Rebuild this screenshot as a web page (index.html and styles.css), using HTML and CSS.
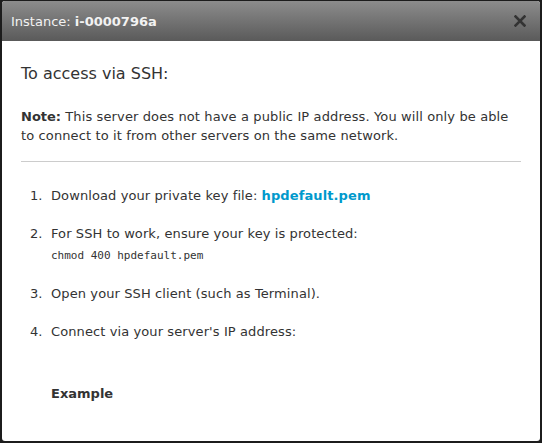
FILE: index.html
```html
<!DOCTYPE html>
<html>
<head>
<meta charset="utf-8">
<link rel="stylesheet" href="styles.css">
</head>
<body>
<div class="dialog">
  <div class="header">
    <div class="title">Instance: <strong>i-0000796a</strong></div>
    <svg class="close" width="12" height="12" viewBox="0 0 12 12"><path d="M1.5 1.5 L10.5 10.5 M10.5 1.5 L1.5 10.5" stroke="#333" stroke-width="2.6" stroke-linecap="square" fill="none"/></svg>
  </div>
  <div class="content">
    <h2 class="heading">To access via SSH:</h2>
    <p class="note"><strong class="note-label">Note:</strong> This server does not have a public IP address. You will only be able to connect to it from other servers on the same network.</p>
    <hr class="rule">
    <ol class="steps">
      <li><span class="num">1.</span><div class="step">Download your private key file: <a class="link" href="#">hpdefault.pem</a></div></li>
      <li><span class="num">2.</span><div class="step">For SSH to work, ensure your key is protected:<div class="code">chmod 400 hpdefault.pem</div></div></li>
      <li><span class="num">3.</span><div class="step">Open your SSH client (such as Terminal).</div></li>
      <li><span class="num">4.</span><div class="step">Connect via your server's IP address:</div></li>
    </ol>
    <div class="example">Example</div>
  </div>
</div>
</body>
</html>
```
FILE: styles.css
```css
html, body {
  margin: 0;
  padding: 0;
  background: #1c1c1c;
  height: 443px;
  overflow: hidden;
}
.dialog {
  margin: 1px 2px 0 2px;
  height: 440px;
  background: #fff;
  border-radius: 3px;
  overflow: hidden;
  font-family: "DejaVu Sans", Verdana, sans-serif;
  color: #333;
}
.header {
  height: 40px;
  background: linear-gradient(#8c8c8c, #5a5a5a);
  display: flex;
  align-items: center;
  justify-content: space-between;
  padding: 0 14px 0 9px;
}
.title {
  color: #f2f2f2;
  font-size: 13px;
}
.title strong {
  font-weight: bold;
}
.close {
  display: block;
}
.content {
  padding: 0 19px;
}
.heading {
  font-weight: normal;
  font-size: 16px;
  margin: 23px 0 0 0;
  color: #333;
}
.note {
  font-size: 13px;
  line-height: 19px;
  letter-spacing: 0.12px;
  margin: 24px 0 0 0;
}
.note-label {
  letter-spacing: 0;
}
.rule {
  border: 0;
  border-top: 1px solid #ccc;
  margin: 16px 0 0 0;
}
.steps {
  list-style: none;
  margin: 24px 0 0 0;
  padding: 0 0 0 9px;
  font-size: 13px;
  line-height: 19px;
  letter-spacing: 0.1px;
}
.steps li {
  display: flex;
  margin-bottom: 19px;
}
.num {
  width: 21px;
  flex: none;
}
.link {
  color: #0099cc;
  font-weight: bold;
  text-decoration: none;
}
.code {
  font-family: "DejaVu Sans Mono", monospace;
  font-size: 11px;
  line-height: 16px;
  letter-spacing: 0;
  margin-top: 5px;
  margin-bottom: 1px;
}
.example {
  font-weight: bold;
  margin: 45px 0 0 30px;
  font-size: 13px;
}
```
